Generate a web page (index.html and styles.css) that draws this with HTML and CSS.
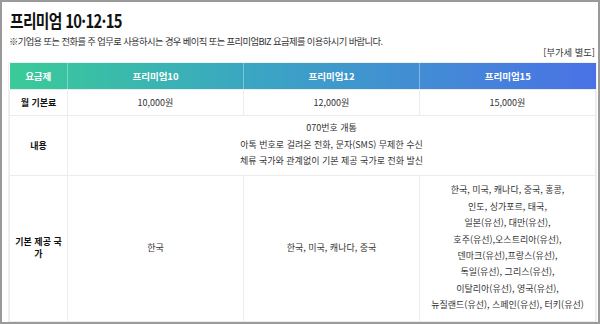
FILE: index.html
```html
<!DOCTYPE html>
<html lang="ko">
<head>
<meta charset="utf-8">
<link rel="stylesheet" href="styles.css">
</head>
<body>
<div class="frame">
  <h1 class="title">프리미엄 10·12·15</h1>
  <p class="notice">※기업용 또는 전화를 주 업무로 사용하시는 경우 베이직 또는 프리미엄BIZ 요금제를 이용하시기 바랍니다.</p>
  <p class="vat">[부가세 별도]</p>
  <table class="plans">
    <colgroup>
      <col class="c-label">
      <col class="c-plan">
      <col class="c-plan">
      <col class="c-plan">
    </colgroup>
    <thead>
      <tr class="head">
        <th>요금제</th>
        <th>프리미엄10</th>
        <th>프리미엄12</th>
        <th>프리미엄15</th>
      </tr>
    </thead>
    <tbody>
      <tr class="r-fee">
        <th>월 기본료</th>
        <td>10,000원</td>
        <td>12,000원</td>
        <td>15,000원</td>
      </tr>
      <tr class="r-content">
        <th>내용</th>
        <td colspan="3">070번호 개통<br>아톡 번호로 걸려온 전화, 문자(SMS) 무제한 수신<br>체류 국가와 관계없이 기본 제공 국가로 전화 발신</td>
      </tr>
      <tr class="r-country">
        <th>기본 제공 국가</th>
        <td>한국</td>
        <td>한국, 미국, 캐나다, 중국</td>
        <td>한국, 미국, 캐나다, 중국, 홍콩,<br>인도, 싱가포르, 태국,<br>일본(유선), 대만(유선),<br>호주(유선),오스트리아(유선),<br>덴마크(유선),프랑스(유선),<br>독일(유선), 그리스(유선),<br>이탈리아(유선), 영국(유선),<br>뉴질랜드(유선), 스페인(유선), 터키(유선)</td>
      </tr>
    </tbody>
  </table>
</div>
</body>
</html>
```
FILE: styles.css
```css
* { box-sizing: border-box; }
html, body { margin: 0; padding: 0; background: #fff; }
body {
  font-family: "Noto Sans CJK KR", "Noto Sans", sans-serif;
  color: #222;
}
.frame {
  width: 600px;
  height: 324px;
  border: 2px solid #9a9a9a;
  padding: 0 3px 0 7px;
  overflow: hidden;
}
.title {
  display: inline-block;
  margin: 7px 0 0 1px;
  font-size: 18px;
  line-height: 22px;
  font-weight: 700;
  letter-spacing: -0.8px;
  color: #111;
  transform: scaleX(0.82);
  transform-origin: left center;
}
.notice {
  margin: 1px 0 0 0;
  font-size: 9.3px;
  line-height: 14px;
  letter-spacing: -0.6px;
  color: #333;
}
.vat {
  margin: -3px 0 0 0;
  font-size: 9.3px;
  line-height: 14px;
  text-align: right;
  color: #333;
}
.plans {
  margin-top: 4px;
  width: 586px;
  border-collapse: collapse;
  table-layout: fixed;
  font-size: 9px;
  box-shadow: 0 0 0 1px #f0f0f0;
}
.c-label { width: 58px; }
.c-plan { width: 176px; }
.plans th, .plans td {
  text-align: center;
  vertical-align: middle;
  padding: 0 3px;
  border: 1px solid #ececec;
}
.plans tbody th {
  font-weight: 700;
  color: #111;
}
.plans td { color: #333; }
.head {
  height: 26px;
  background: linear-gradient(90deg, #3acb98 0%, #3aa7c2 40%, #4a72e6 100%);
}
.head th {
  color: #fff;
  font-weight: 700;
  font-size: 9.5px;
  border: 0;
  border-left: 1px solid rgba(255,255,255,0.35);
}
.head th:first-child { border-left: 0; }
.r-fee { height: 26px; }
.r-content { height: 60px; }
.r-content td { line-height: 16.5px; }
.r-country { height: 146px; }
.r-country td { line-height: 16.4px; }
.r-country th { line-height: 12px; word-break: break-all; }
```
